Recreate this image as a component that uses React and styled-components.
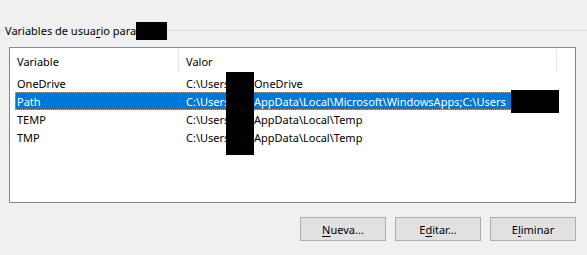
import React from 'react'
import styled, { createGlobalStyle } from 'styled-components'

const Global = createGlobalStyle`
  body {
    margin: 0;
    background: #f0f0f0;
    font-family: "Noto Sans", "Liberation Sans", sans-serif;
    font-size: 11px;
    color: #000;
  }
`

const rows = [
  { name: 'OneDrive', post: 'OneDrive' },
  { name: 'Path', post: 'AppData\\Local\\Microsoft\\WindowsApps;C:\\Users', selected: true },
  { name: 'TEMP', post: 'AppData\\Local\\Temp' },
  { name: 'TMP', post: 'AppData\\Local\\Temp' },
]

export default function App() {
  return (
    <>
      <Global />
      <Page>
        <GroupTitle>
          <Rule $w="5px" />
          <Label>Variables de usua<u>r</u>io para</Label>
          <TitleRedact />
          <Rule />
        </GroupTitle>

        <ListBox>
          <HeaderRow>
            <HeadCell $w="168px">Variable</HeadCell>
            <Divider />
            <HeadCell $w="377px">Valor</HeadCell>
            <Divider />
          </HeaderRow>
          {rows.map(r => (
            <Row key={r.name} $selected={r.selected}>
              <Cell>{r.name}</Cell>
              <Cell>
                {/* user folder sits under the redaction bar */}
                <Prefix>C:\Users</Prefix>
                {r.post}
              </Cell>
            </Row>
          ))}
          <Redact $left="216px" $top="24px" $w="28px" $h="83px" />
          <Redact $left="501px" $top="42px" $w="48px" $h="23px" />
        </ListBox>

        <Buttons>
          <Button><u>N</u>ueva...</Button>
          <Button>E<u>d</u>itar...</Button>
          <Button>E<u>l</u>iminar</Button>
        </Buttons>
      </Page>
    </>
  )
}

const Page = styled.div`
  width: 587px;
  height: 255px;
  overflow: hidden;
`

const GroupTitle = styled.div`
  display: flex;
  align-items: center;
  padding-top: 22px;
  height: 18px;
`

const Rule = styled.div`
  height: 1px;
  background: #dcdcdc;
  width: ${p => p.$w || 'auto'};
  flex: ${p => (p.$w ? 'none' : 1)};
  margin-top: -1px;
`

const Label = styled.span`
  white-space: nowrap;
  line-height: 18px;
  u { text-underline-offset: 2px; }
`

const TitleRedact = styled.div`
  width: 31px;
  height: 18px;
  background: #000;
`

const ListBox = styled.div`
  position: relative;
  margin: 7px 0 0 9px;
  width: 565px;
  height: 154px;
  border: 1px solid #828790;
  background: #fff;
  overflow: hidden;
`

const HeaderRow = styled.div`
  display: flex;
  height: 26px;
  align-items: flex-start;
`

const HeadCell = styled.div`
  width: ${p => p.$w};
  padding-left: 7px;
  box-sizing: border-box;
  line-height: 27px;
  white-space: nowrap;
`

const Divider = styled.div`
  width: 1px;
  height: 23px;
  margin-top: 1px;
  background: #e5e5e5;
`

const Row = styled.div`
  display: grid;
  grid-template-columns: 171px 1fr;
  margin-left: 5px;
  width: 542px;
  height: 18px;
  box-sizing: border-box;
  line-height: 19px;
  white-space: nowrap;
  background: ${p => (p.$selected ? '#0078d7' : 'transparent')};
  color: ${p => (p.$selected ? '#fff' : '#000')};
  outline: ${p => (p.$selected ? '1px dotted #f59a3c' : 'none')};
  outline-offset: -1px;
`

const Cell = styled.div`
  padding-left: 2px;
  &:last-child { padding-left: 0; }
`

const Prefix = styled.span`
  display: inline-block;
  width: 68px;
  vertical-align: top;
`

const Redact = styled.div`
  position: absolute;
  left: ${p => p.$left};
  top: ${p => p.$top};
  width: ${p => p.$w};
  height: ${p => p.$h};
  background: #000;
`

const Buttons = styled.div`
  display: flex;
  justify-content: flex-end;
  gap: 9px;
  margin-top: 14px;
  padding-right: 11px;
`

const Button = styled.button`
  width: 86px;
  height: 24px;
  box-sizing: border-box;
  border: 1px solid #adadad;
  background: #e1e1e1;
  font-family: inherit;
  font-size: 11px;
  color: #000;
  padding: 0;
  u { text-underline-offset: 2px; }
`
